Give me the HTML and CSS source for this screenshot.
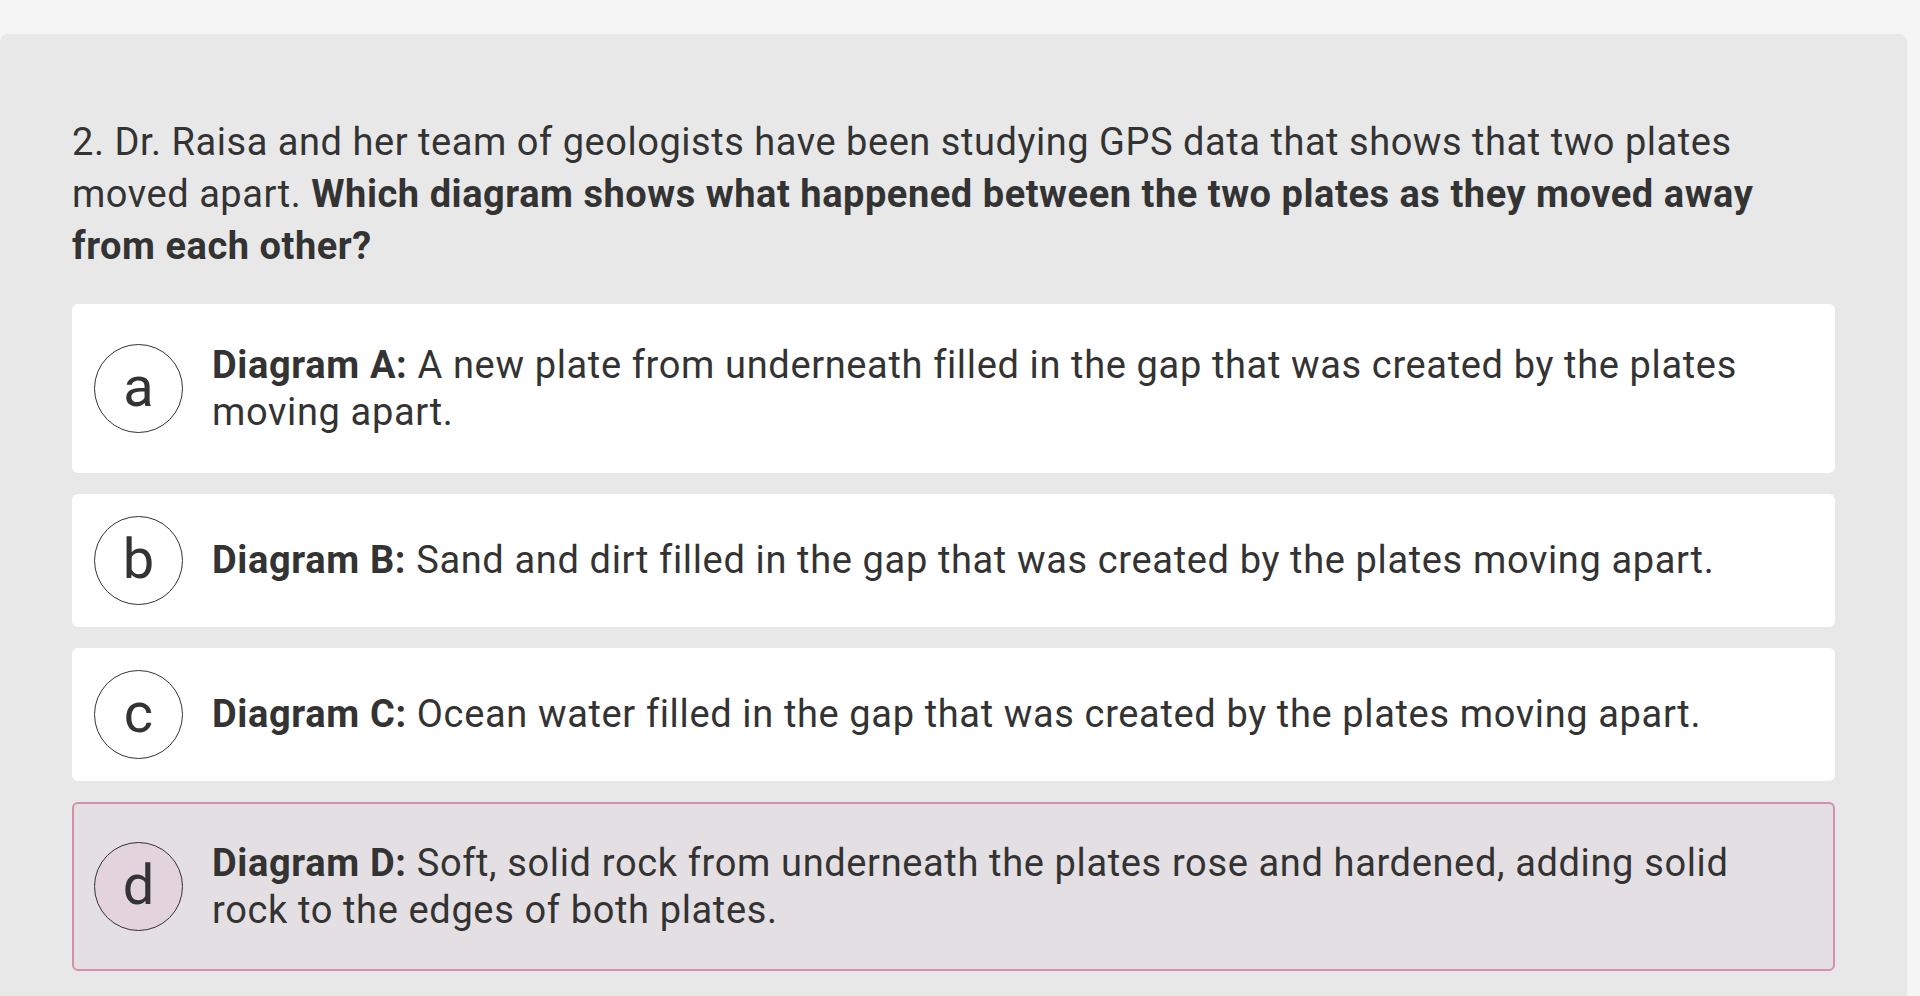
FILE: index.html
```html
<!DOCTYPE html>
<html lang="en">
<head>
<meta charset="utf-8">
<title>Question 2</title>
<link rel="stylesheet" href="styles.css">
</head>
<body>
<main class="panel">
  <p class="question">2. Dr. Raisa and her team of geologists have been studying GPS data that shows that two plates moved apart. <strong>Which diagram shows what happened between the two plates as they moved away from each other?</strong></p>
  <ul class="options">
    <li class="option">
      <span class="letter">a</span>
      <span class="text"><strong>Diagram A:</strong> A new plate from underneath filled in the gap that was created by the plates moving apart.</span>
    </li>
    <li class="option">
      <span class="letter">b</span>
      <span class="text"><strong>Diagram B:</strong> Sand and dirt filled in the gap that was created by the plates moving apart.</span>
    </li>
    <li class="option">
      <span class="letter">c</span>
      <span class="text"><strong>Diagram C:</strong> Ocean water filled in the gap that was created by the plates moving apart.</span>
    </li>
    <li class="option selected">
      <span class="letter">d</span>
      <span class="text"><strong>Diagram D:</strong> Soft, solid rock from underneath the plates rose and hardened, adding solid rock to the edges of both plates.</span>
    </li>
  </ul>
</main>
</body>
</html>
```
FILE: styles.css
```css
html, body {
  margin: 0;
  padding: 0;
  background: #f5f5f5;
  height: 100%;
  overflow: hidden;
}

body {
  font-family: "Roboto", "Liberation Sans", sans-serif;
  color: #333333;
}

.panel {
  display: block;
  margin: 34px 13px 0 0;
  min-height: 962px;
  box-sizing: border-box;
  background: #e8e8e8;
  border-radius: 8px 8px 0 0;
  padding: 82px 72px 0 72px;
}

.question {
  margin: 0 0 32px 0;
  font-family: "Roboto", "Liberation Sans", sans-serif;
  font-size: 38px;
  line-height: 52px;
  letter-spacing: 0.54px;
  color: #333333;
}

.question strong {
  font-weight: 700;
}

.options {
  list-style: none;
  margin: 0;
  padding: 0;
  display: flex;
  flex-direction: column;
  gap: 21px;
}

.option {
  display: flex;
  align-items: center;
  gap: 29px;
  background: #ffffff;
  border-radius: 6px;
  padding: 22px 45px 22px 22px;
  box-sizing: border-box;
}

.option.selected {
  background: #e4dfe2;
  border: 2px solid #d48fa9;
  padding: 20px 43px 20px 20px;
}

.letter {
  flex: none;
  width: 89px;
  height: 89px;
  box-sizing: border-box;
  border: 1.5px solid #333333;
  border-radius: 50%;
  display: flex;
  align-items: center;
  justify-content: center;
  font-family: "Roboto", "Liberation Sans", sans-serif;
  font-size: 56px;
  line-height: 1;
  padding-bottom: 4px;
  color: #333333;
}

.selected .letter {
  background: #e2d3dc;
}

.text {
  flex: 1;
  padding: 15.5px 0;
  font-family: "Roboto", "Liberation Sans", sans-serif;
  font-size: 38px;
  line-height: 47px;
  letter-spacing: 0.64px;
  color: #333333;
}

.text strong {
  font-weight: 700;
}
```
